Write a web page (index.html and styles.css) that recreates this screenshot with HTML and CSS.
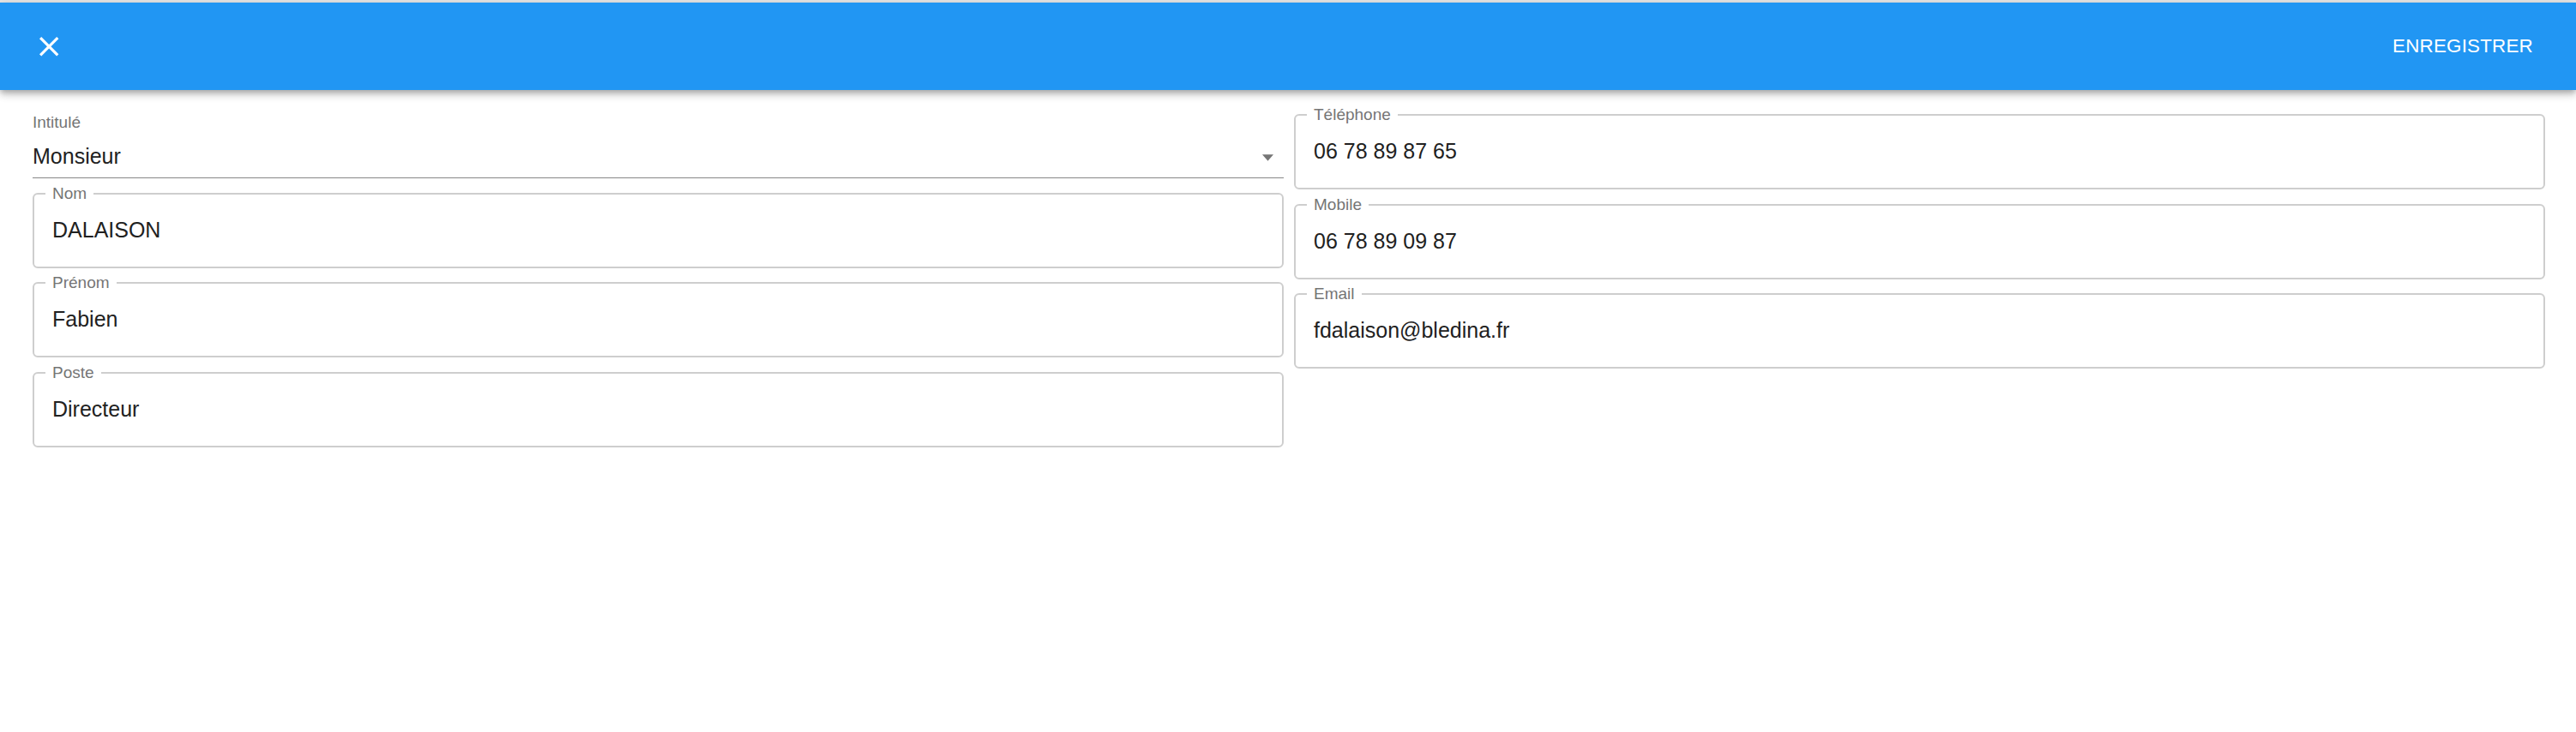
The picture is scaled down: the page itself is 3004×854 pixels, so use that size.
FILE: index.html
```html
<!DOCTYPE html>
<html lang="fr">
<head>
<meta charset="utf-8">
<title>Contact</title>
<link rel="stylesheet" href="styles.css">
</head>
<body>
<div class="page">
  <header class="appbar">
    <button class="icon-btn" aria-label="Fermer">
      <svg class="close-icon" viewBox="0 0 24 24" aria-hidden="true"><path d="M19 6.41L17.59 5 12 10.59 6.41 5 5 6.41 10.59 12 5 17.59 6.41 19 12 13.41 17.59 19 19 17.59 13.41 12z"/></svg>
    </button>
    <button class="text-btn">ENREGISTRER</button>
  </header>

  <main class="form">
    <div class="column">
      <div class="select">
        <div class="select-label">Intitulé</div>
        <div class="select-row">
          <div class="select-value">Monsieur</div>
          <svg class="select-arrow" viewBox="0 0 14 8" aria-hidden="true"><polygon points="0,0 14,0 7,8"/></svg>
        </div>
      </div>
      <fieldset class="field">
        <legend class="field-label">Nom</legend>
        <div class="field-value">DALAISON</div>
      </fieldset>
      <fieldset class="field">
        <legend class="field-label">Prénom</legend>
        <div class="field-value">Fabien</div>
      </fieldset>
      <fieldset class="field">
        <legend class="field-label">Poste</legend>
        <div class="field-value">Directeur</div>
      </fieldset>
    </div>
    <div class="column">
      <fieldset class="field">
        <legend class="field-label">Téléphone</legend>
        <div class="field-value">06 78 89 87 65</div>
      </fieldset>
      <fieldset class="field">
        <legend class="field-label">Mobile</legend>
        <div class="field-value">06 78 89 09 87</div>
      </fieldset>
      <fieldset class="field">
        <legend class="field-label">Email</legend>
        <div class="field-value">fdalaison@bledina.fr</div>
      </fieldset>
    </div>
  </main>
</div>
</body>
</html>
```

FILE: styles.css
```css
* {
  box-sizing: border-box;
}

html, body {
  margin: 0;
  padding: 0;
  background: #ffffff;
}

body {
  font-family: "Liberation Sans", Arial, Helvetica, sans-serif;
  color: #212121;
}

.page {
  min-height: 854px;
  border-top: 3px solid #e6e6e6;
}

.appbar {
  position: relative;
  z-index: 2;
  height: 102px;
  background: #2196f3;
  display: flex;
  align-items: center;
  justify-content: space-between;
  padding: 0 50px 0 38px;
  box-shadow: 0 3px 6px -1px rgba(0, 0, 0, 0.2),
              0 6px 8px 0 rgba(0, 0, 0, 0.14),
              0 2px 14px 0 rgba(0, 0, 0, 0.12);
}

.icon-btn {
  background: none;
  border: 0;
  padding: 0;
  margin: 0;
  display: flex;
  cursor: pointer;
}

.close-icon {
  width: 38.4px;
  height: 38.4px;
  fill: #ffffff;
  display: block;
}

.text-btn {
  background: none;
  border: 0;
  padding: 0;
  margin: 0;
  color: #ffffff;
  font-family: "Liberation Sans", Arial, Helvetica, sans-serif;
  font-size: 22.4px;
  line-height: 26px;
  letter-spacing: 0.2px;
  cursor: pointer;
}

.form {
  display: grid;
  grid-template-columns: 1fr 1fr;
  column-gap: 12px;
  padding: 19.3px 36px 0 38px;
  align-items: start;
}

.column {
  display: flex;
  flex-direction: column;
  gap: 7.5px;
}

/* Select (standard variant) */
.select {
  height: 84px;
  padding-top: 9px;
  border-bottom: 1px solid #878787;
  display: flex;
  flex-direction: column;
}

.select-label {
  font-size: 19px;
  line-height: 20px;
  color: #757575;
}

.select-row {
  margin-top: 13.5px;
  height: 30px;
  display: flex;
  align-items: center;
  justify-content: space-between;
}

.select-value {
  font-size: 25px;
  line-height: 30px;
  color: #212121;
}

.select-arrow {
  width: 13px;
  height: 8px;
  margin-right: 12px;
  margin-top: 5px;
  fill: #767676;
}

/* Outlined fields */
.field {
  margin: 0;
  min-width: 0;
  height: 97px;
  border: 2px solid #cecece;
  border-radius: 6px;
  padding: 17px 21px 0 21px;
}

.field-label {
  font-size: 19px;
  line-height: 20px;
  color: #757575;
  padding: 0 8px;
  margin-left: -8px;
}

.field-value {
  font-size: 25px;
  line-height: 30px;
  color: #212121;
  white-space: nowrap;
}
```
